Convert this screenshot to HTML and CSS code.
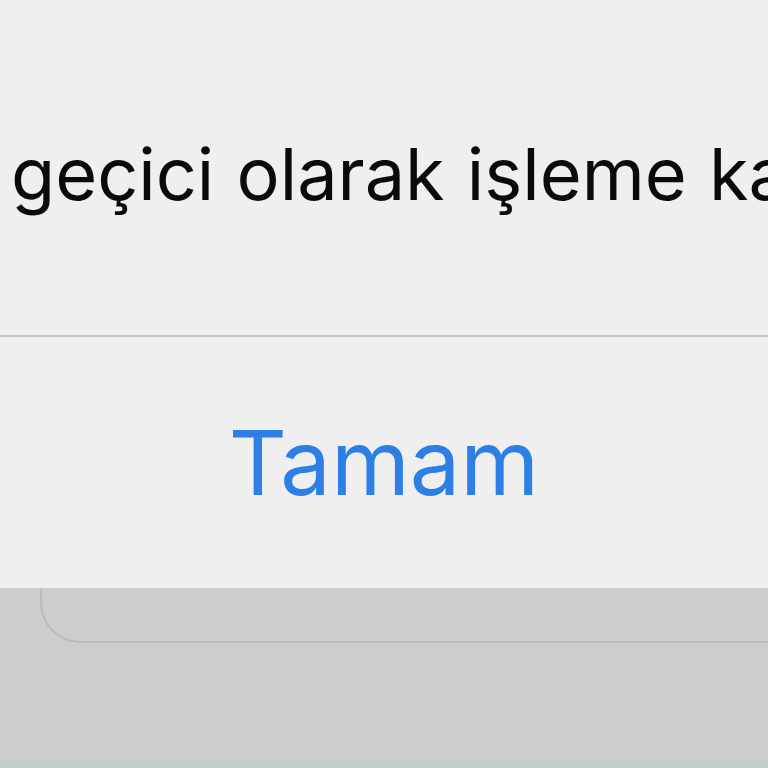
FILE: index.html
```html
<!DOCTYPE html>
<html lang="tr">
<head>
  <meta charset="UTF-8">
  <meta name="viewport" content="width=device-width, initial-scale=1.0">
  <title>Uyarı</title>
  <link rel="stylesheet" href="styles.css">
</head>
<body>
  <div class="alert">
    <div class="alert-message">
      <p>geçici olarak işleme kapatılmıştır.</p>
    </div>
    <div class="alert-button">Tamam</div>
  </div>
  <div class="under">
    <div class="field"></div>
  </div>
  <div class="bottom-strip"></div>
</body>
</html>
```

FILE: styles.css
```css
body {
  margin: 0;
  padding: 0;
  background: #cdcdcd;
  font-family: Inter, "Noto Sans", sans-serif;
  overflow: hidden;
}

.alert {
  height: 588px;
  background: #efeff0;
  display: flex;
  flex-direction: column;
  overflow: hidden;
}

.alert-message {
  height: 337px;
  flex-shrink: 0;
  border-bottom: 2px solid #c3c3c5;
  padding-left: 11px;
  box-sizing: border-box;
}

.alert-message p {
  margin: 0;
  padding-top: 138px;
  font-size: 72px;
  line-height: 1;
  word-spacing: 2px;
  color: #0a0a0a;
  white-space: nowrap;
}

.alert-button {
  flex: 1;
  font-size: 90px;
  line-height: 1;
  color: #2d7fe6;
  padding-top: 81px;
  text-align: center;
  cursor: pointer;
}

.under {
  height: 172px;
}

.field {
  margin-left: 40px;
  height: 53px;
  border-left: 2px solid #bcbcbc;
  border-bottom: 2px solid #bcbcbc;
  border-bottom-left-radius: 40px;
}

.bottom-strip {
  height: 8px;
  background: #c6cbcb;
}
```
